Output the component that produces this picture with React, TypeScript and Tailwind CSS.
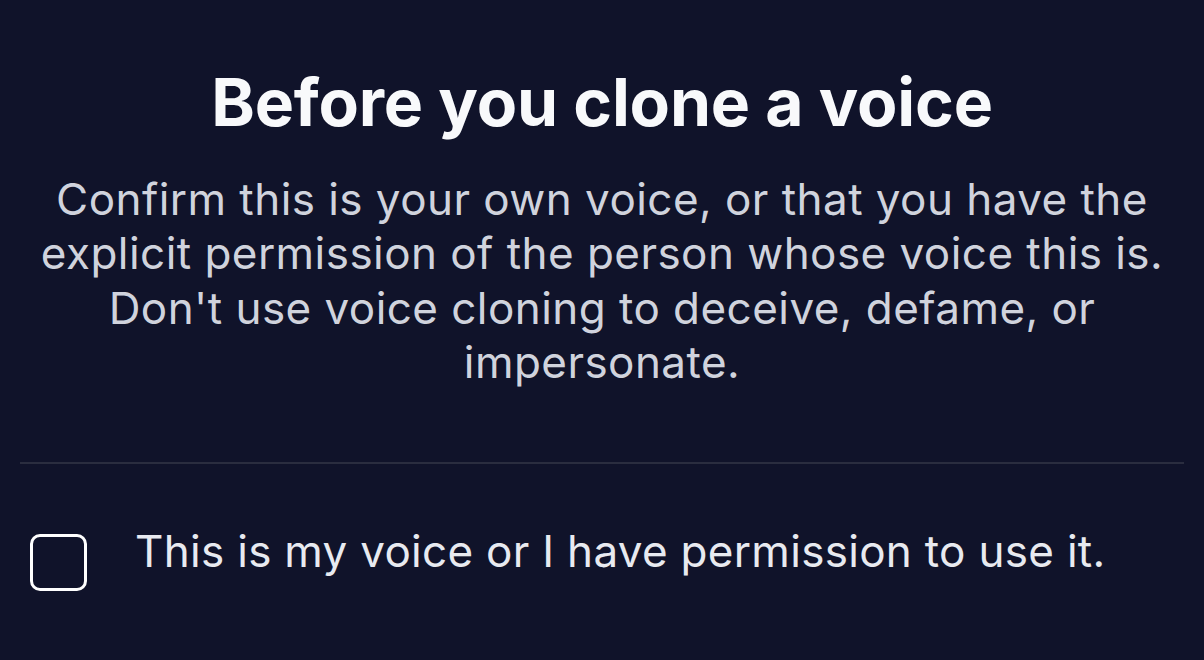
import React, { useState } from 'react';

const App: React.FC = () => {
  const [checked, setChecked] = useState(false);

  return (
    <div className="w-[1204px] h-[660px] bg-[#10132a] overflow-hidden" style={{ fontFamily: 'Inter, "Noto Sans", sans-serif' }}>
      <div className="flex flex-col items-center pt-[66px] px-[20px]">
        <h1 className="text-[66px] leading-[72px] font-bold text-[#f8f9fb] tracking-[-0.2px]">Before you clone a voice</h1>
        <p className="mt-[34px] text-[44px] leading-[54.3px] text-[#d0d3dd] text-center tracking-[0.45px]">
          Confirm this is your own voice, or that you have the explicit permission of the person whose voice this is. Don't use voice cloning to deceive, defame, or impersonate.
        </p>
        <div className="w-full h-[2px] bg-[#2a2d3f] mt-[73px]" />
        <label className="w-full flex items-start gap-[48px] pl-[10px] mt-[70px] cursor-pointer">
          <button
            type="button"
            onClick={() => setChecked(c => !c)}
            className="w-[57px] h-[57px] rounded-[10px] border-[3.5px] border-white shrink-0"
          />
          <span className="-mt-[10px] text-[44px] leading-[54px] text-[#e8eaf0] tracking-[0.3px]">This is my voice or I have permission to use it.</span>
        </label>
      </div>
    </div>
  );
};

export default App;
